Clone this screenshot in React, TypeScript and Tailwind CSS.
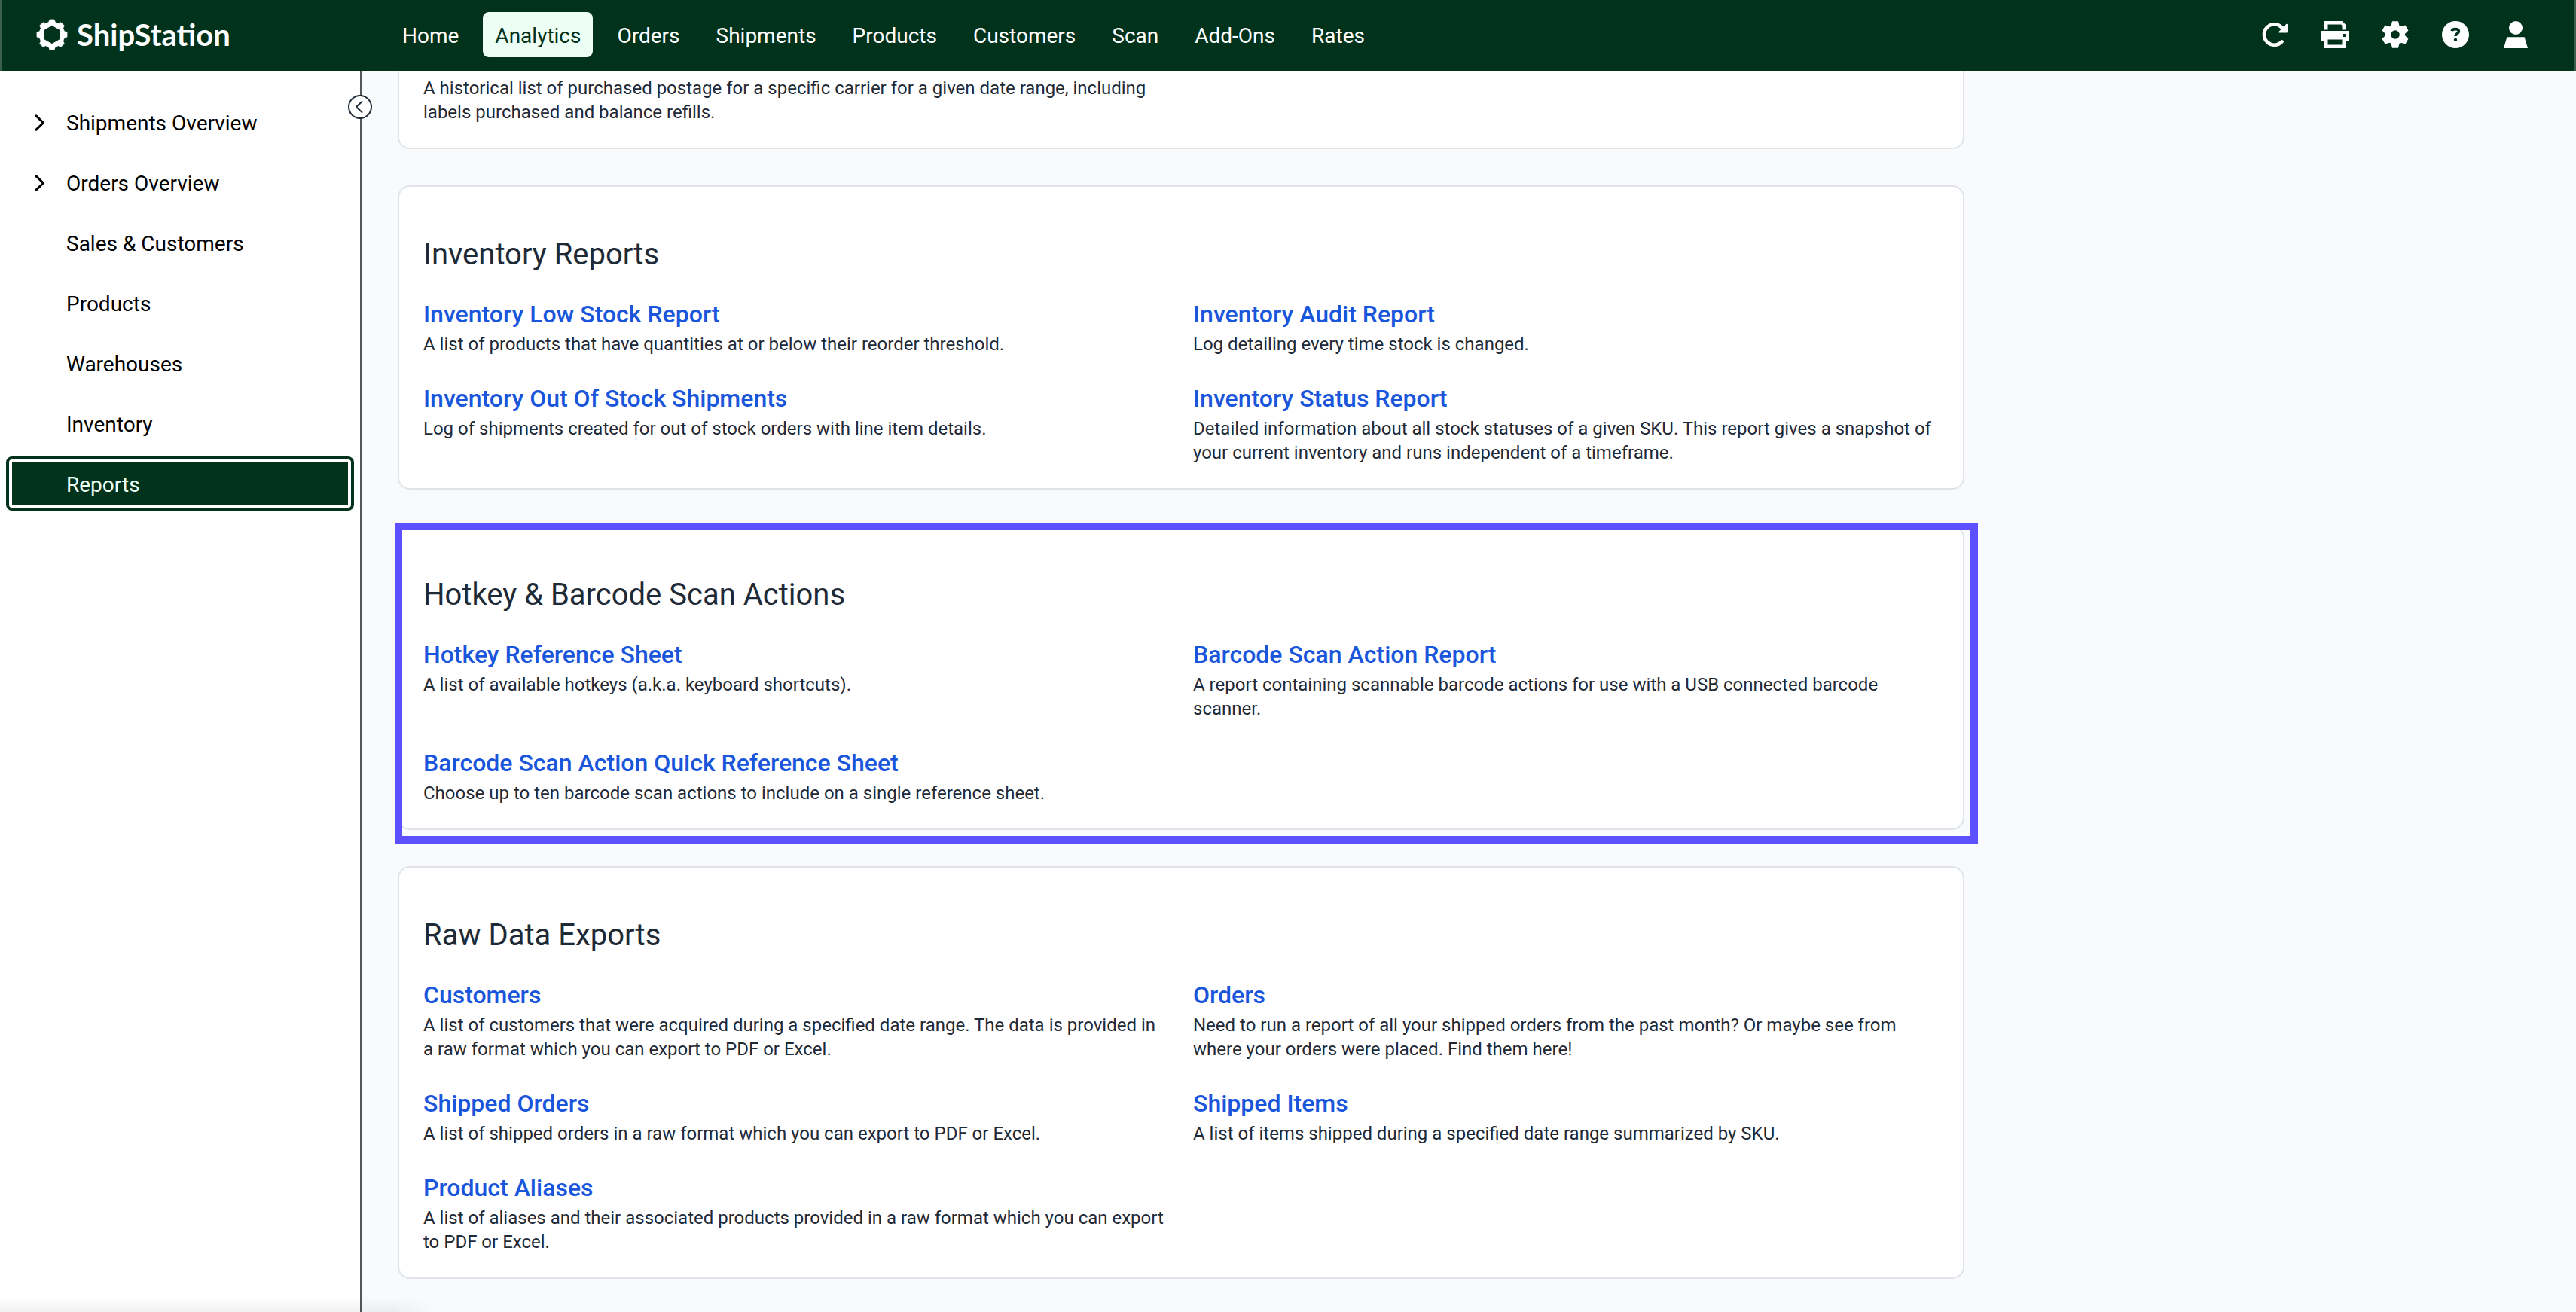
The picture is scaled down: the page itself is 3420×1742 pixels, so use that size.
import React from "react";

type Report = { title: string; text: string };
type Section = { heading: string; reports: Report[]; highlighted?: boolean };
type SideItem = { label: string; expandable?: boolean; current?: boolean };

const NAV = ["Home", "Analytics", "Orders", "Shipments", "Products", "Customers", "Scan", "Add-Ons", "Rates"];

const SIDE: SideItem[] = [
  { label: "Shipments Overview", expandable: true },
  { label: "Orders Overview", expandable: true },
  { label: "Sales & Customers" },
  { label: "Products" },
  { label: "Warehouses" },
  { label: "Inventory" },
  { label: "Reports", current: true },
];

const SECTIONS: Section[] = [
  {
    heading: "Inventory Reports",
    reports: [
      { title: "Inventory Low Stock Report", text: "A list of products that have quantities at or below their reorder threshold." },
      { title: "Inventory Audit Report", text: "Log detailing every time stock is changed." },
      { title: "Inventory Out Of Stock Shipments", text: "Log of shipments created for out of stock orders with line item details." },
      { title: "Inventory Status Report", text: "Detailed information about all stock statuses of a given SKU. This report gives a snapshot of your current inventory and runs independent of a timeframe." },
    ],
  },
  {
    heading: "Hotkey & Barcode Scan Actions",
    highlighted: true,
    reports: [
      { title: "Hotkey Reference Sheet", text: "A list of available hotkeys (a.k.a. keyboard shortcuts)." },
      { title: "Barcode Scan Action Report", text: "A report containing scannable barcode actions for use with a USB connected barcode scanner." },
      { title: "Barcode Scan Action Quick Reference Sheet", text: "Choose up to ten barcode scan actions to include on a single reference sheet." },
    ],
  },
  {
    heading: "Raw Data Exports",
    reports: [
      { title: "Customers", text: "A list of customers that were acquired during a specified date range. The data is provided in a raw format which you can export to PDF or Excel." },
      { title: "Orders", text: "Need to run a report of all your shipped orders from the past month? Or maybe see from where your orders were placed. Find them here!" },
      { title: "Shipped Orders", text: "A list of shipped orders in a raw format which you can export to PDF or Excel." },
      { title: "Shipped Items", text: "A list of items shipped during a specified date range summarized by SKU." },
      { title: "Product Aliases", text: "A list of aliases and their associated products provided in a raw format which you can export to PDF or Excel." },
    ],
  },
];

/** Outline of a cog: `top` and `base` are half-angles of a tooth at its tip and foot. */
function gearPath(c: number, teeth: number, rOut: number, rIn: number, top: number, base: number) {
  const pts: string[] = [];
  for (let i = 0; i < teeth; i++) {
    const a = (i * 2 * Math.PI) / teeth - Math.PI / 2;
    for (const [r, d] of [[rIn, -base], [rOut, -top], [rOut, top], [rIn, base]]) {
      pts.push(`${(c + r * Math.cos(a + d)).toFixed(2)} ${(c + r * Math.sin(a + d)).toFixed(2)}`);
    }
  }
  return `M${pts.join("L")}Z`;
}

function Logo() {
  return (
    <a href="#" className="flex items-center gap-3 text-white">
      <svg viewBox="0 0 42 42" className="size-[42px]" fill="currentColor" aria-hidden="true">
        <path
          fillRule="evenodd"
          d={gearPath(21, 8, 20.2, 17, 0.15, 0.26) + "M21 8.5L31.8 14.7V27.3L21 33.5L10.2 27.3V14.7Z"}
          stroke="currentColor"
          strokeWidth="0.8"
          strokeLinejoin="round"
        />
      </svg>
      <span className="font-['Lato',sans-serif] text-[40px] leading-10 font-bold">ShipStation</span>
    </a>
  );
}

function RefreshIcon() {
  return (
    <svg viewBox="0 0 36 36" className="size-9" fill="none" stroke="currentColor" aria-hidden="true">
      <path d="M27.6 27.4A13.7 13.7 0 1 1 27 8L29 10" strokeWidth="4.6" strokeLinecap="round" />
      <path d="M34 4.8V14.6H24.2Z" fill="currentColor" strokeWidth="2" strokeLinejoin="round" />
    </svg>
  );
}

function PrinterIcon() {
  return (
    <svg viewBox="0 0 36 36" className="size-9" fill="currentColor" fillRule="evenodd" aria-hidden="true">
      <path d="M4 0H27.5L32 4.5V11.5H27.5V6L26.3 4.5H8.5V11.5H4Z" />
      <path d="M0 13H36V27H32V36H4V27H0ZM28.5 17V21H32.5V17ZM8.5 24.5V31.5H27.5V24.5Z" />
    </svg>
  );
}

function SettingsIcon() {
  return (
    <svg viewBox="0 0 36 36" className="size-9" fill="currentColor" fillRule="evenodd" aria-hidden="true">
      <path d={gearPath(18, 6, 18.3, 13, 0.22, 0.44) + "M18 12.2A5.8 5.8 0 1 0 18 23.8A5.8 5.8 0 1 0 18 12.2Z"} />
    </svg>
  );
}

function HelpIcon() {
  return (
    <svg viewBox="0 0 36 36" className="size-9" aria-hidden="true">
      <circle cx="18" cy="18" r="18" fill="currentColor" />
      <path d="M13.2 13.2C13.6 11.4 15.4 10.6 18 10.6C20.7 10.6 22.4 11.8 22.4 13.7C22.4 16.4 18.2 16.6 18 20" fill="none" stroke="#01321c" strokeWidth="3.6" />
      <circle cx="18" cy="24.9" r="2.2" fill="#01321c" />
    </svg>
  );
}

function UserIcon() {
  return (
    <svg viewBox="0 0 36 36" className="size-9" fill="currentColor" aria-hidden="true">
      <circle cx="18" cy="9" r="9" />
      <path d="M6.4 21.2H29.6L34 36H2Z" />
    </svg>
  );
}

const TOOLS = [
  { label: "Refresh", icon: <RefreshIcon /> },
  { label: "Print", icon: <PrinterIcon /> },
  { label: "Settings", icon: <SettingsIcon /> },
  { label: "Help", icon: <HelpIcon /> },
  { label: "Account", icon: <UserIcon /> },
];

function Header() {
  return (
    <header className="relative z-10 flex h-[94px] items-center border-x-2 border-[#3a5f4d] bg-[#01321c] pr-[60px] pb-0.5 pl-[46px] text-white">
      <div className="w-[470px] shrink-0">
        <Logo />
      </div>
      <nav aria-label="Main" className="flex flex-1 gap-4">
        {NAV.map((n) => (
          <a
            key={n}
            href="#"
            className={
              n === "Analytics"
                ? "rounded-lg bg-[#edfff5] px-4 pt-3 pb-2 text-[28px] leading-10 text-[#01321c]"
                : "px-4 pt-3 pb-2 text-[28px] leading-10"
            }
          >
            {n}
          </a>
        ))}
      </nav>
      <div className="flex gap-11">
        {TOOLS.map((t) => (
          <button key={t.label} type="button" aria-label={t.label}>
            {t.icon}
          </button>
        ))}
      </div>
    </header>
  );
}

function Sidebar() {
  return (
    <aside className="relative w-[480px] shrink-0 border-r-2 border-[#55565a] bg-white pt-10 text-black">
      <ul className="flex flex-col gap-6 px-4">
        {SIDE.map((s) => (
          <li key={s.label} className={s.current ? "-m-2 rounded-lg border-4 border-[#01321c] p-1" : undefined}>
            <a
              href="#"
              aria-current={s.current ? "page" : undefined}
              className={
                s.current
                  ? "flex h-14 items-center bg-[#01321c] pt-1 text-[28px] text-[#edfff5]"
                  : "flex h-14 items-center pt-1 text-[28px]"
              }
            >
              <span className="w-[72px] pl-7">
                {s.expandable && (
                  <svg viewBox="0 0 20 24" className="h-6 w-5" fill="none" stroke="currentColor" strokeWidth="3" strokeLinecap="round" strokeLinejoin="round" aria-hidden="true">
                    <path d="M4 1.8L13.5 11L4 20.2" />
                  </svg>
                )}
              </span>
              {s.label}
            </a>
          </li>
        ))}
      </ul>
      <button
        type="button"
        aria-label="Collapse sidebar"
        className="absolute top-8 -right-4 flex size-8 items-center justify-center rounded-full border-2 border-[#1f2a37] bg-white text-[#1f2a37]"
      >
        <svg viewBox="0 0 28 28" className="size-7" fill="none" stroke="currentColor" strokeWidth="2" strokeLinecap="round" strokeLinejoin="round" aria-hidden="true">
          <path d="M16.5 7L9 14L16.5 21" />
        </svg>
      </button>
    </aside>
  );
}

function ReportItem({ title, text }: Report) {
  return (
    <li>
      <a href="#" className="block text-[32px] leading-[48px] font-medium text-[#1a56db]">
        {title}
      </a>
      <p className="text-2xl leading-8">{text}</p>
    </li>
  );
}

function SectionCard({ heading, reports, highlighted }: Section) {
  return (
    <section className="relative rounded-2xl border-2 border-[#e0e4e8] bg-white px-8 pt-[33px] pb-[31px]">
      <h2 className="pt-[33px] pb-[31px] text-[40px] leading-[48px]">{heading}</h2>
      <ul className="grid grid-cols-2 gap-8">
        {reports.map((r) => (
          <ReportItem key={r.title} {...r} />
        ))}
      </ul>
      {highlighted && (
        <div className="pointer-events-none absolute -top-1.5 -right-5 -bottom-5 -left-1.5 border-10 border-[#5c50ff]" />
      )}
    </section>
  );
}

export default function App() {
  return (
    <div className="relative flex min-h-screen flex-col bg-[#f9fafc] font-['Roboto',sans-serif] text-[#1f2a37]">
      <Header />
      <div className="flex flex-1">
        <Sidebar />
        <main className="min-w-0 flex-1 px-12 pb-11">
          <div className="flex max-w-[2080px] flex-col gap-12">
            <section className="-mt-7 grid grid-cols-2 gap-8 rounded-2xl border-2 border-[#e0e4e8] bg-white px-8 pt-[33px] pb-[31px]">
              <p className="text-2xl leading-8">
                A historical list of purchased postage for a specific carrier for a given date range, including labels purchased and balance refills.
              </p>
            </section>
            {SECTIONS.map((s) => (
              <SectionCard key={s.heading} {...s} />
            ))}
          </div>
        </main>
      </div>
      <div className="pointer-events-none absolute bottom-0 left-0 h-5 w-[580px] bg-linear-to-t from-black/5 to-transparent mask-r-from-90%" />
    </div>
  );
}
